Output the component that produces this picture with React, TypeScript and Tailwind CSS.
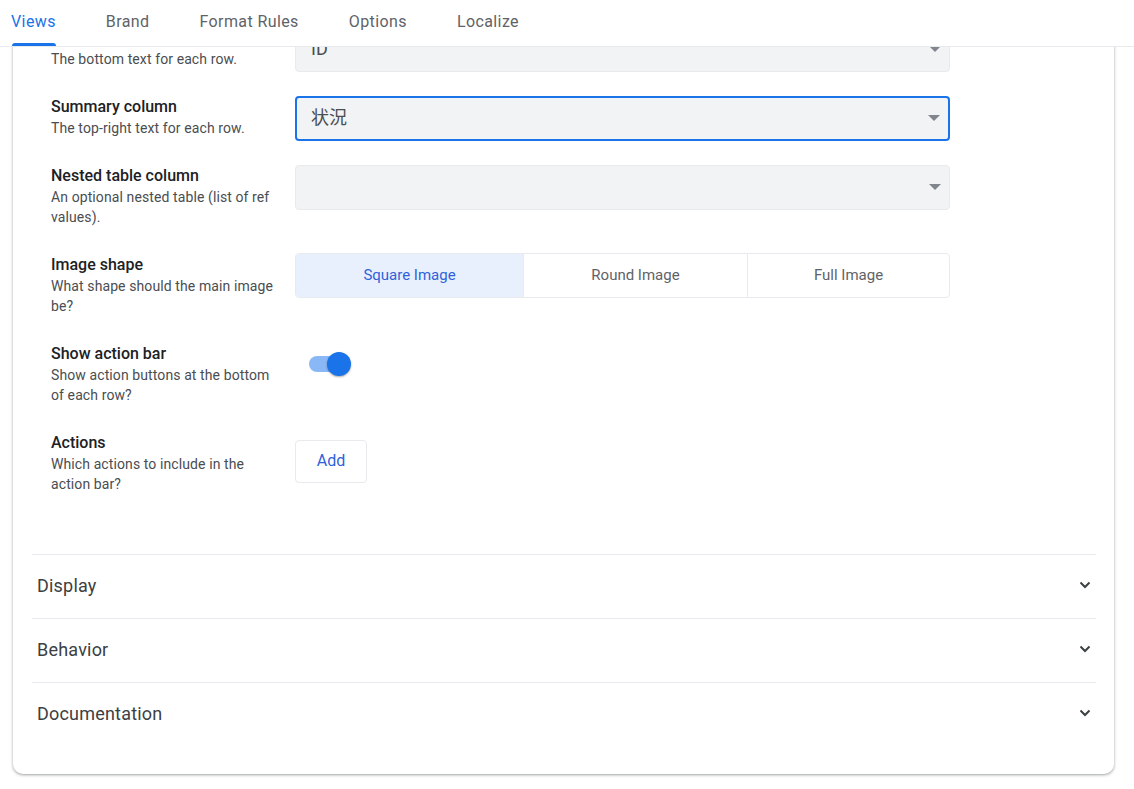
const chevron = (
  <svg width="12" height="8" viewBox="0 0 12 8" fill="none" stroke="#3c4043" strokeWidth="2" className="mb-[2px]">
    <path d="M1.5 1.5L6 6l4.5-4.5" />
  </svg>
);

const tabs = ['Views', 'Brand', 'Format Rules', 'Options', 'Localize'];
const sections = ['Display', 'Behavior', 'Documentation'];

function Row({ title, desc, children }: { title: string; desc: string; children?: React.ReactNode }) {
  return (
    <div className="flex">
      <div className="w-[244px] shrink-0 pb-[2.3px] pr-5 pt-[0.5px]">
        <div className="text-[16px] leading-[22px] font-medium text-[#202124]">{title}</div>
        <div className="text-[14px] leading-[20px] tracking-[0.1px] text-[#4a4d51]">{desc}</div>
      </div>
      <div className="w-[655px]">{children}</div>
    </div>
  );
}

function Select({ value, focused }: { value?: string; focused?: boolean }) {
  return (
    <div
      className={`flex h-[45px] items-center justify-between rounded bg-[#f1f3f4] pr-2 text-[18px] text-[#4a4d51] ${
        focused ? 'border-2 border-[#1a73e8] pl-[14px]' : 'border border-[#e8eaed] pl-[15px]'
      }`}
    >
      <span className="mb-[2px]">{value}</span>
      <svg width="12" height="6" viewBox="0 0 12 6">
        <path d="M0 0h12L6 6z" fill="#80868b" />
      </svg>
    </div>
  );
}

export default function App() {
  return (
    <div className="flex h-[789px] w-[1134px] flex-col overflow-hidden bg-white font-['Roboto','Noto_Sans_CJK_JP',sans-serif]">
      <div className="z-10 flex h-[47px] shrink-0 items-start gap-[50px] border-b border-[#e8eaed] bg-white pl-[11px] text-[16px] tracking-[0.4px] text-[#5f6368]">
        {tabs.map((tab, i) => (
          <div
            key={tab}
            className={`relative flex h-[46px] items-center pb-[3px] ${i === 0 ? 'text-[#1a73e8]' : ''}`}
          >
            {tab}
            {i === 0 && <div className="absolute bottom-0 left-px right-0 h-[3px] rounded-t bg-[#1a73e8]" />}
          </div>
        ))}
      </div>

      <div className="flex min-h-0 flex-1 flex-col justify-end overflow-hidden pb-[15px]">
        <div className="ml-[13px] w-[1101px] shrink-0 rounded-b-[10px] bg-white pb-[28px] pl-[19px] pr-[18px] shadow-[0_1px_2px_rgba(60,64,67,0.3),0_1px_3px_1px_rgba(60,64,67,0.15)]">
          <div className="flex flex-col gap-6 pl-[19px]">
            <Row title="Subtitle column" desc="The bottom text for each row.">
              <Select value="ID" />
            </Row>
            <Row title="Summary column" desc="The top-right text for each row.">
              <Select value="状況" focused />
            </Row>
            <Row title="Nested table column" desc="An optional nested table (list of ref values).">
              <Select />
            </Row>
            <Row title="Image shape" desc="What shape should the main image be?">
              <div className="flex h-[45px] rounded border border-[#e8eaed] pb-0 text-[15px]">
                <div className="flex w-[227px] items-center justify-center rounded-l bg-[#e8f0fe] pb-[2px] text-[#2f62d9]">Square Image</div>
                <div className="flex w-[225px] items-center justify-center border-x border-[#e8eaed] pb-[2px] text-[#5f6368]">Round Image</div>
                <div className="flex flex-1 items-center justify-center pb-[2px] text-[#5f6368]">Full Image</div>
              </div>
            </Row>
            <Row title="Show action bar" desc="Show action buttons at the bottom of each row?">
              <div className="relative ml-[14px] mt-[14px] h-[16px] w-[34px] rounded-full bg-[#8ab8f6]">
                <div className="absolute -right-[8px] -top-[4px] h-[24px] w-[24px] rounded-full bg-[#1a73e8] shadow-[0_1px_2px_rgba(0,0,0,0.35)]" />
              </div>
            </Row>
            <Row title="Actions" desc="Which actions to include in the action bar?">
              <div className="mt-[9px] flex h-[43px] w-[72px] items-center justify-center rounded border border-[#e8eaed] pb-[2px] text-[16px] text-[#2f62d9]">
                Add
              </div>
            </Row>
          </div>

          <div className="mt-[58.2px]">
            {sections.map((s) => (
              <div key={s} className="flex h-[64px] items-center justify-between border-t border-[#e8eaed] pb-[2px] pl-[5px] pr-[5px]">
                <span className="text-[18px] tracking-[0.2px] text-[#3c4043]">{s}</span>
                {chevron}
              </div>
            ))}
          </div>
        </div>
      </div>
    </div>
  );
}
